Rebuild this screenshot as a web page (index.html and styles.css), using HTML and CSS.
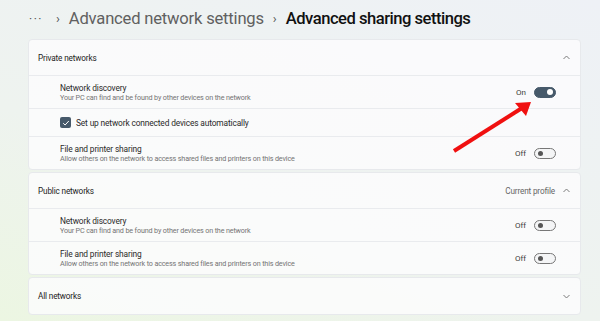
FILE: index.html
```html
<!DOCTYPE html>
<html lang="en">
<head>
    <meta charset="UTF-8">
    <title>Advanced sharing settings</title>
    <link rel="stylesheet" href="styles.css">
</head>
<body>
    <div class="crumbs">
        <span class="more">&middot;&middot;&middot;</span>
        <span class="sep">&#8250;</span>
        <span class="parent">Advanced network settings</span>
        <span class="sep">&#8250;</span>
        <span class="current">Advanced sharing settings</span>
    </div>

    <div class="card">
        <div class="head">
            <span class="name">Private networks</span>
            <svg class="chev" width="7" height="5" viewBox="0 0 7 5"><polyline points="0.5,4 3.5,1 6.5,4" fill="none" stroke="#7a7a7a" stroke-width="1"/></svg>
        </div>
        <div class="row">
            <div class="info">
                <div class="title">Network discovery</div>
                <div class="desc">Your PC can find and be found by other devices on the network</div>
            </div>
            <span class="state">On</span>
            <span class="toggle on"></span>
        </div>
        <div class="row check-row">
            <span class="box">
                <svg width="8" height="8" viewBox="0 0 8 8"><path d="M1.2 4.2 L3.1 6 L6.8 2" fill="none" stroke="#fff" stroke-width="1"/></svg>
            </span>
            <span class="check-label">Set up network connected devices automatically</span>
        </div>
        <div class="row">
            <div class="info">
                <div class="title">File and printer sharing</div>
                <div class="desc">Allow others on the network to access shared files and printers on this device</div>
            </div>
            <span class="state">Off</span>
            <span class="toggle"></span>
        </div>
    </div>

    <div class="card">
        <div class="head">
            <span class="name">Public networks</span>
            <span class="profile">Current profile</span>
            <svg class="chev" width="7" height="5" viewBox="0 0 7 5"><polyline points="0.5,4 3.5,1 6.5,4" fill="none" stroke="#7a7a7a" stroke-width="1"/></svg>
        </div>
        <div class="row">
            <div class="info">
                <div class="title">Network discovery</div>
                <div class="desc">Your PC can find and be found by other devices on the network</div>
            </div>
            <span class="state">Off</span>
            <span class="toggle"></span>
        </div>
        <div class="row">
            <div class="info">
                <div class="title">File and printer sharing</div>
                <div class="desc">Allow others on the network to access shared files and printers on this device</div>
            </div>
            <span class="state">Off</span>
            <span class="toggle"></span>
        </div>
    </div>

    <div class="card">
        <div class="head last">
            <span class="name">All networks</span>
            <svg class="chev" width="7" height="5" viewBox="0 0 7 5"><polyline points="0.5,1 3.5,4 6.5,1" fill="none" stroke="#7a7a7a" stroke-width="1"/></svg>
        </div>
    </div>

    <!-- red arrow pointing at the toggle -->
    <svg class="arrow" width="600" height="321" viewBox="0 0 600 321">
        <line x1="454" y1="151" x2="522" y2="108" stroke="#f01010" stroke-width="4"/>
        <polygon points="531,102 515,103 526,116" fill="#f01010"/>
    </svg>
</body>
</html>
```

FILE: styles.css
```css
body {
    margin: 0;
    width: 600px;
    height: 321px;
    overflow: hidden;
    font-family: Roboto, "Noto Sans", sans-serif;
    color: #222;
    background: linear-gradient(20deg, #ecf6e2 0%, #eef3ef 40%, #eef1f6 100%);
    position: relative;
}
.crumbs {
    height: 37px;
    display: flex;
    align-items: center;
    padding-left: 29px;
    font-size: 16.6px;
}
.more {
    color: #555;
    font-size: 12px;
    letter-spacing: 1.5px;
    margin-right: 4px;
}
.sep {
    color: #555;
    font-size: 13px;
    margin: 0 9px 0 9px;
}
.parent {
    color: #606060;
    letter-spacing: -0.2px;
}
.current {
    color: #111;
    font-weight: 500;
    letter-spacing: -0.5px;
}
.card {
    margin: 2px 19px 0 28px;
    background: rgba(251, 252, 253, 0.85);
    border: 1px solid #e7e9ec;
    border-radius: 4px;
}
.head {
    height: 35px;
    display: flex;
    align-items: center;
    padding: 0 10px 0 9px;
    font-size: 8.2px;
    letter-spacing: -0.15px;
    border-bottom: 1px solid #e9ebee;
}
.head.last {
    height: 36px;
    border-bottom: none;
}
.name {
    flex: 1;
}
.profile {
    color: #666;
    margin-right: 8px;
}
.chev {
    display: block;
}
.row {
    height: 32px;
    display: flex;
    align-items: center;
    padding: 0 24px 0 31px;
    border-bottom: 1px solid #e9ebee;
}
.row:last-child {
    border-bottom: none;
}
.info {
    flex: 1;
    padding-top: 1px;
    letter-spacing: -0.15px;
}
.title {
    font-size: 8.4px;
    line-height: 10px;
    color: #2a2a2a;
}
.desc {
    font-size: 7.2px;
    line-height: 9px;
    color: #747474;
}
.state {
    font-size: 8px;
    color: #3a3a3a;
    margin-right: 8px;
}
.toggle {
    width: 20px;
    height: 9px;
    border: 1px solid #777;
    border-radius: 6px;
    position: relative;
    background: #f4f5f6;
}
.toggle::after {
    content: "";
    position: absolute;
    top: 2px;
    left: 3px;
    width: 5px;
    height: 5px;
    border-radius: 50%;
    background: #555;
}
.toggle.on {
    background: #46596a;
    border-color: #46596a;
}
.toggle.on::after {
    left: auto;
    right: 2px;
    top: 1.5px;
    width: 6px;
    height: 6px;
    background: #fff;
}
.check-row {
    height: 27px;
}
.box {
    width: 11px;
    height: 11px;
    border-radius: 2px;
    background: #46596a;
    display: flex;
    align-items: center;
    justify-content: center;
    margin-right: 5px;
}
.check-label {
    font-size: 8.4px;
    letter-spacing: -0.15px;
    color: #2a2a2a;
}
.arrow {
    position: absolute;
    left: 0;
    top: 0;
}
```
